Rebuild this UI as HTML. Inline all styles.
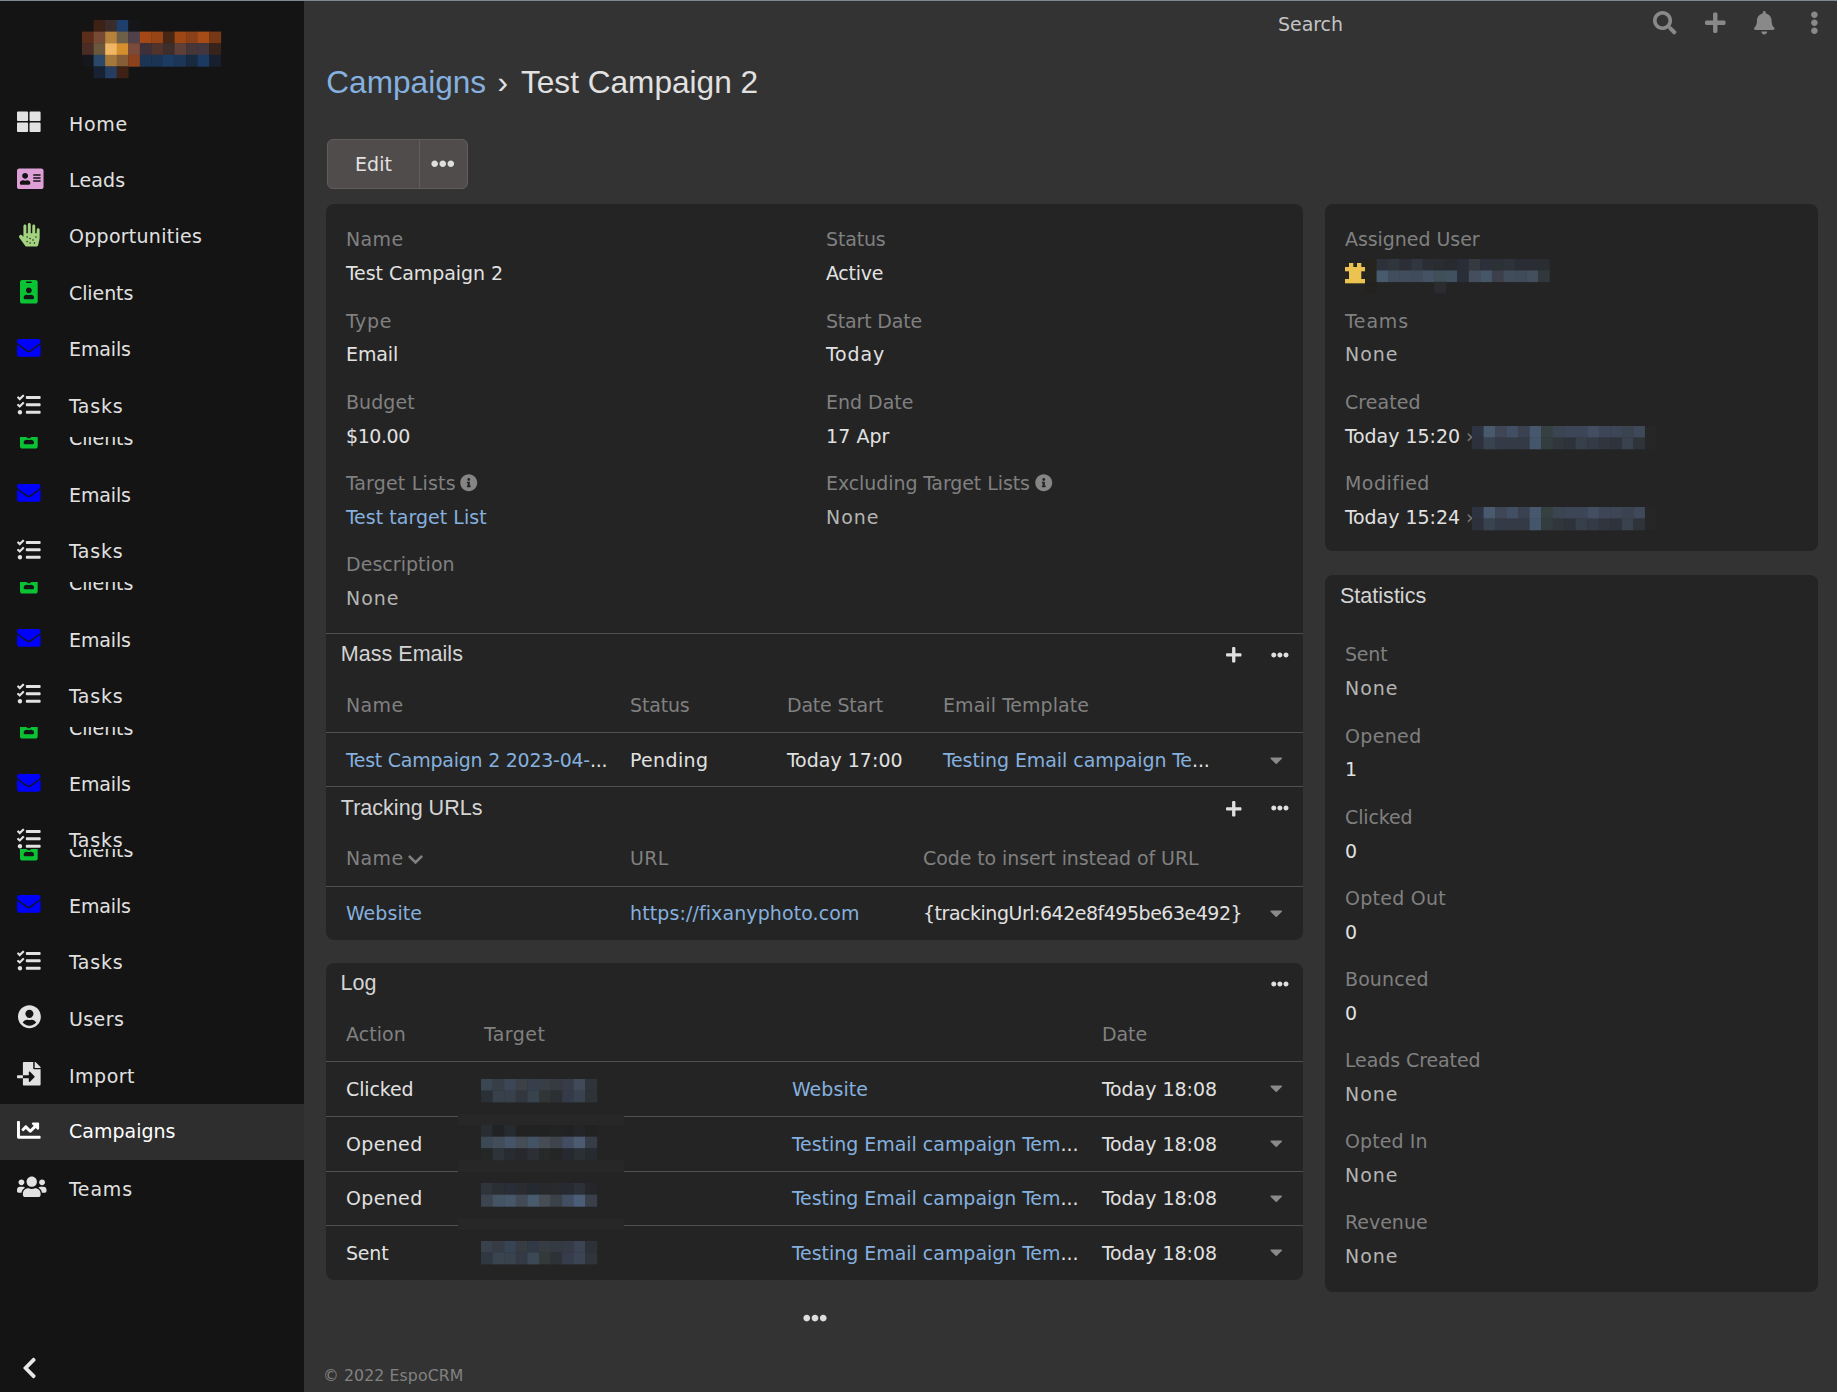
<!DOCTYPE html>
<html lang="en"><head><meta charset="utf-8"><title>Test Campaign 2 - Campaigns</title><style>
html,body{margin:0;padding:0;background:#333333}
body{width:1837px;height:1392px;background:#333333;position:relative;overflow:hidden;font-family:"DejaVu Sans Condensed","Liberation Sans",sans-serif}
.t{position:absolute;white-space:nowrap;line-height:normal}
.b{font-family:"DejaVu Sans Condensed","Liberation Sans",sans-serif;font-size:19.9px;letter-spacing:0.1px;transform:scaleX(1.06);transform-origin:0 50%}
.f{font-family:"DejaVu Sans Condensed","Liberation Sans",sans-serif;font-size:16.5px;letter-spacing:0.1px;transform:scaleX(1.06);transform-origin:0 50%}
.h{font-family:"Liberation Sans",sans-serif;font-size:31.6px}
.p{font-family:"Liberation Sans",sans-serif;font-size:21.55px}
.i{position:absolute;display:block;overflow:visible}
.r{position:absolute}
.clip{position:absolute;overflow:hidden}
.btn{position:absolute;box-sizing:border-box;background:#504c4b;border:1px solid #625d5c;border-radius:6px}
.btn .sep{position:absolute;top:0;bottom:0;width:1px;background:#625d5c}
</style></head>
<body>
<div class="r" style="left:0.0px;top:0.0px;width:304.0px;height:1392.0px;background:#141414;"></div>
<div class="r" style="left:0.0px;top:0.0px;width:1837.0px;height:1.0px;background:#7c8a95;"></div>
<svg class="i" style="left:82.00px;top:20.00px" width="138.84" height="58.00" viewBox="0 0 138.84 58.00"><rect x="11.57" y="0.00" width="11.87" height="11.90" fill="#3d2115"/><rect x="23.14" y="0.00" width="11.87" height="11.90" fill="#3b2c2c"/><rect x="34.71" y="0.00" width="11.87" height="11.90" fill="#1e3f6b"/><rect x="46.28" y="0.00" width="11.87" height="11.90" fill="#15161a"/><rect x="0.00" y="11.60" width="11.87" height="11.90" fill="#5c2d18"/><rect x="11.57" y="11.60" width="11.87" height="11.90" fill="#764a35"/><rect x="23.14" y="11.60" width="11.87" height="11.90" fill="#b5823b"/><rect x="34.71" y="11.60" width="11.87" height="11.90" fill="#6e5f48"/><rect x="46.28" y="11.60" width="11.87" height="11.90" fill="#4f404b"/><rect x="57.85" y="11.60" width="11.87" height="11.90" fill="#a34816"/><rect x="69.42" y="11.60" width="11.87" height="11.90" fill="#974516"/><rect x="80.99" y="11.60" width="11.87" height="11.90" fill="#472714"/><rect x="92.56" y="11.60" width="11.87" height="11.90" fill="#9e4716"/><rect x="104.13" y="11.60" width="11.87" height="11.90" fill="#8a4118"/><rect x="115.70" y="11.60" width="11.87" height="11.90" fill="#a84c17"/><rect x="127.27" y="11.60" width="11.87" height="11.90" fill="#763815"/><rect x="0.00" y="23.20" width="11.87" height="11.90" fill="#4a2c25"/><rect x="11.57" y="23.20" width="11.87" height="11.90" fill="#6b573b"/><rect x="23.14" y="23.20" width="11.87" height="11.90" fill="#f0b565"/><rect x="34.71" y="23.20" width="11.87" height="11.90" fill="#d48f2e"/><rect x="46.28" y="23.20" width="11.87" height="11.90" fill="#7a4a3b"/><rect x="57.85" y="23.20" width="11.87" height="11.90" fill="#3d3038"/><rect x="69.42" y="23.20" width="11.87" height="11.90" fill="#50332b"/><rect x="80.99" y="23.20" width="11.87" height="11.90" fill="#3d2e2c"/><rect x="92.56" y="23.20" width="11.87" height="11.90" fill="#5f4038"/><rect x="104.13" y="23.20" width="11.87" height="11.90" fill="#473638"/><rect x="115.70" y="23.20" width="11.87" height="11.90" fill="#43363c"/><rect x="127.27" y="23.20" width="11.87" height="11.90" fill="#38231a"/><rect x="0.00" y="34.80" width="11.87" height="11.90" fill="#15171c"/><rect x="11.57" y="34.80" width="11.87" height="11.90" fill="#2b4868"/><rect x="23.14" y="34.80" width="11.87" height="11.90" fill="#a4783a"/><rect x="34.71" y="34.80" width="11.87" height="11.90" fill="#855d36"/><rect x="46.28" y="34.80" width="11.87" height="11.90" fill="#8a411c"/><rect x="57.85" y="34.80" width="11.87" height="11.90" fill="#1b3454"/><rect x="69.42" y="34.80" width="11.87" height="11.90" fill="#1b3454"/><rect x="80.99" y="34.80" width="11.87" height="11.90" fill="#1c3a62"/><rect x="92.56" y="34.80" width="11.87" height="11.90" fill="#1b3657"/><rect x="104.13" y="34.80" width="11.87" height="11.90" fill="#182a40"/><rect x="115.70" y="34.80" width="11.87" height="11.90" fill="#1c3962"/><rect x="127.27" y="34.80" width="11.87" height="11.90" fill="#171f2e"/><rect x="11.57" y="46.40" width="11.87" height="11.90" fill="#172334"/><rect x="23.14" y="46.40" width="11.87" height="11.90" fill="#243d61"/><rect x="34.71" y="46.40" width="11.87" height="11.90" fill="#3d2114"/></svg>
<div class="r" style="left:0.0px;top:1104.0px;width:304.0px;height:56.3px;background:#2e2e2e;"></div>
<svg class="i" style="left:17.20px;top:110.20px;" width="23.60" height="23.60" viewBox="0 0 512 512"><path fill="#e2e2e2" d="M296 32h192c13.255 0 24 10.745 24 24v160c0 13.255-10.745 24-24 24H296c-13.255 0-24-10.745-24-24V56c0-13.255 10.745-24 24-24zm-80 0H24C10.745 32 0 42.745 0 56v160c0 13.255 10.745 24 24 24h192c13.255 0 24-10.745 24-24V56c0-13.255-10.745-24-24-24zM0 296v160c0 13.255 10.745 24 24 24h192c13.255 0 24-10.745 24-24V296c0-13.255-10.745-24-24-24H24c-13.255 0-24 10.745-24 24zm296 184h192c13.255 0 24-10.745 24-24V296c0-13.255-10.745-24-24-24H296c-13.255 0-24 10.745-24 24v160c0 13.255 10.745 24 24 24z"/></svg>
<div class="t b" style="left:69.4px;top:112.6px;color:#e1e1e1;letter-spacing:0.65px;">Home</div>
<svg class="i" style="left:17.10px;top:166.60px;" width="26.55" height="23.60" viewBox="0 0 576 512"><path fill="#dd9fd6" d="M528 32H48C21.5 32 0 53.5 0 80v352c0 26.500 21.500 48 48 48h480c26.500 0 48-21.500 48-48V80c0-26.500-21.500-48-48-48zm-352 96c35.300 0 64 28.700 64 64s-28.700 64-64 64-64-28.700-64-64 28.700-64 64-64zm112 236.800c0 10.600-10 19.200-22.400 19.200H86.400C74 384 64 375.400 64 364.800v-19.200c0-31.800 30.100-57.600 67.200-57.600h5c12.300 5.100 25.700 8 39.800 8s27.600-2.900 39.800-8h5c37.100 0 67.200 25.800 67.200 57.600v19.200zM512 312c0 4.400-3.600 8-8 8H360c-4.400 0-8-3.600-8-8v-16c0-4.400 3.600-8 8-8h144c4.400 0 8 3.600 8 8v16zm0-64c0 4.400-3.600 8-8 8H360c-4.400 0-8-3.600-8-8v-16c0-4.400 3.600-8 8-8h144c4.400 0 8 3.600 8 8v16zm0-64c0 4.400-3.600 8-8 8H360c-4.400 0-8-3.600-8-8v-16c0-4.400 3.600-8 8-8h144c4.400 0 8 3.600 8 8v16z"/></svg>
<div class="t b" style="left:69.4px;top:169.0px;color:#e1e1e1;letter-spacing:0.18px;">Leads</div>
<svg class="i" style="left:18.67px;top:222.80px;" width="20.65" height="23.60" viewBox="0 0 448 512"><path fill="#a3d37f" d="M416 112c-17.600 0-32 14.400-32 32v72c0 4.400-3.600 8-8 8h-16c-4.400 0-8-3.600-8-8V64c0-17.600-14.400-32-32-32s-32 14.400-32 32v152c0 4.400-3.600 8-8 8h-16c-4.400 0-8-3.600-8-8V32c0-17.600-14.400-32-32-32s-32 14.400-32 32v184c0 4.400-3.600 8-8 8h-16c-4.400 0-8-3.600-8-8V64c0-17.600-14.400-32-32-32S96 46.400 96 64v241l-23.600-32.500c-13-17.900-38-21.800-55.900-8.800s-21.800 38-8.800 55.900l125.600 172.700c9 12.400 23.500 19.800 38.800 19.800h197.600c22.300 0 41.600-15.300 46.700-37l26.500-112.700c3.200-13.700 4.900-28.300 5.100-42.300V144c0-17.600-14.400-32-32-32zM176 416c-8.800 0-16-7.200-16-16s7.200-16 16-16 16 7.200 16 16-7.200 16-16 16zm0-96c-8.800 0-16-7.200-16-16s7.200-16 16-16 16 7.200 16 16-7.200 16-16 16zm64 128c-8.800 0-16-7.200-16-16s7.200-16 16-16 16 7.200 16 16-7.200 16-16 16zm0-96c-8.800 0-16-7.200-16-16s7.200-16 16-16 16 7.200 16 16-7.200 16-16 16zm64 32c-8.800 0-16-7.200-16-16s7.200-16 16-16 16 7.200 16 16-7.200 16-16 16zm32 64c-8.800 0-16-7.200-16-16s7.200-16 16-16 16 7.200 16 16-7.200 16-16 16zm32-128c-8.800 0-16-7.200-16-16s7.200-16 16-16 16 7.200 16 16-7.200 16-16 16z"/></svg>
<div class="t b" style="left:69.4px;top:225.2px;color:#e1e1e1;letter-spacing:0.27px;">Opportunities</div>
<svg class="i" style="left:20.15px;top:279.80px;" width="17.70" height="23.60" viewBox="0 0 384 512"><path fill="#0ac335" d="M336 0H48C21.500 0 0 21.500 0 48v416c0 26.500 21.500 48 48 48h288c26.500 0 48-21.500 48-48V48c0-26.500-21.500-48-48-48zM144 32h96c8.800 0 16 7.200 16 16s-7.200 16-16 16h-96c-8.800 0-16-7.200-16-16s7.200-16 16-16zm48 128c35.300 0 64 28.700 64 64s-28.700 64-64 64-64-28.700-64-64 28.700-64 64-64zm112 236.800c0 10.600-10 19.200-22.400 19.200H102.400C90 416 80 407.400 80 396.800v-19.200c0-31.800 30.100-57.600 67.200-57.600h5c12.300 5.100 25.700 8 39.800 8s27.600-2.900 39.800-8h5c37.100 0 67.200 25.800 67.200 57.600v19.200z"/></svg>
<div class="t b" style="left:69.4px;top:282.2px;color:#e1e1e1;letter-spacing:-0.08px;">Clients</div>
<svg class="i" style="left:17.20px;top:335.60px;" width="23.60" height="23.60" viewBox="0 0 512 512"><path fill="#0000ff" d="M502.300 190.800c3.900-3.100 9.700-.2 9.700 4.700V400c0 26.500-21.500 48-48 48H48c-26.500 0-48-21.500-48-48V195.600c0-5 5.700-7.800 9.700-4.700 22.400 17.400 52.100 39.500 154.100 113.600 21.100 15.400 56.700 47.800 92.200 47.600 35.700.3 72-32.800 92.300-47.600 102-74.100 131.600-96.300 154-113.700zM256 320c23.200.4 56.600-29.200 73.400-41.400 132.700-96.300 142.800-104.700 173.400-128.700 5.800-4.500 9.200-11.500 9.200-18.900v-19c0-26.500-21.500-48-48-48H48C21.500 64 0 85.500 0 112v19c0 7.400 3.400 14.300 9.200 18.900 30.600 23.900 40.700 32.400 173.400 128.700 16.800 12.200 50.200 41.800 73.400 41.400z"/></svg>
<div class="t b" style="left:69.4px;top:338.0px;color:#e1e1e1;letter-spacing:-0.10px;">Emails</div>
<svg class="i" style="left:17.20px;top:392.60px;" width="23.60" height="23.60" viewBox="0 0 512 512"><path fill="#e2e2e2" d="M139.610 35.500a12 12 0 0 0-17 0L58.930 98.810l-22.700-22.120a12 12 0 0 0-17 0L3.530 92.410a12 12 0 0 0 0 17l47.590 47.400a12.780 12.780 0 0 0 17.610 0l15.590-15.620L156.520 69a12.090 12.090 0 0 0 .09-17zm0 159.190a12 12 0 0 0-17 0l-63.680 63.720-22.700-22.100a12 12 0 0 0-17 0L3.530 252a12 12 0 0 0 0 17L51 316.500a12.770 12.770 0 0 0 17.600 0l15.700-15.690 72.200-72.220a12 12 0 0 0 .09-16.900zM64 368c-26.490 0-48.590 21.500-48.590 48S37.530 464 64 464a48 48 0 0 0 0-96zm432 16H208a16 16 0 0 0-16 16v32a16 16 0 0 0 16 16h288a16 16 0 0 0 16-16v-32a16 16 0 0 0-16-16zm0-320H208a16 16 0 0 0-16 16v32a16 16 0 0 0 16 16h288a16 16 0 0 0 16-16V80a16 16 0 0 0-16-16zm0 160H208a16 16 0 0 0-16 16v32a16 16 0 0 0 16 16h288a16 16 0 0 0 16-16v-32a16 16 0 0 0-16-16z"/></svg>
<div class="t b" style="left:69.4px;top:395.0px;color:#e1e1e1;letter-spacing:0.74px;">Tasks</div>
<div class="clip" style="left:0;top:436.6px;width:304px;height:24px"><svg class="i" style="left:20.15px;top:-12.00px;" width="17.70" height="23.60" viewBox="0 0 384 512"><path fill="#0ac335" d="M336 0H48C21.500 0 0 21.500 0 48v416c0 26.500 21.500 48 48 48h288c26.500 0 48-21.500 48-48V48c0-26.500-21.500-48-48-48zM144 32h96c8.800 0 16 7.200 16 16s-7.200 16-16 16h-96c-8.800 0-16-7.200-16-16s7.200-16 16-16zm48 128c35.300 0 64 28.700 64 64s-28.700 64-64 64-64-28.700-64-64 28.700-64 64-64zm112 236.800c0 10.600-10 19.200-22.400 19.200H102.400C90 416 80 407.400 80 396.800v-19.200c0-31.800 30.100-57.600 67.200-57.600h5c12.300 5.100 25.700 8 39.800 8s27.600-2.900 39.800-8h5c37.100 0 67.200 25.800 67.200 57.600v19.200z"/></svg><div class="t b" style="left:69.4px;top:-9.6px;color:#e1e1e1;letter-spacing:-0.08px;">Clients</div></div>
<svg class="i" style="left:17.20px;top:481.20px;" width="23.60" height="23.60" viewBox="0 0 512 512"><path fill="#0000ff" d="M502.300 190.800c3.900-3.100 9.700-.2 9.700 4.700V400c0 26.500-21.500 48-48 48H48c-26.500 0-48-21.500-48-48V195.600c0-5 5.700-7.800 9.700-4.700 22.400 17.400 52.100 39.500 154.100 113.600 21.100 15.400 56.700 47.800 92.200 47.600 35.700.3 72-32.800 92.300-47.600 102-74.100 131.600-96.300 154-113.700zM256 320c23.200.4 56.600-29.200 73.400-41.400 132.700-96.300 142.800-104.700 173.400-128.700 5.800-4.500 9.200-11.500 9.200-18.900v-19c0-26.500-21.500-48-48-48H48C21.500 64 0 85.500 0 112v19c0 7.400 3.400 14.300 9.200 18.900 30.600 23.900 40.700 32.400 173.400 128.700 16.800 12.200 50.200 41.800 73.400 41.400z"/></svg>
<div class="t b" style="left:69.4px;top:483.6px;color:#e1e1e1;letter-spacing:-0.10px;">Emails</div>
<svg class="i" style="left:17.20px;top:537.60px;" width="23.60" height="23.60" viewBox="0 0 512 512"><path fill="#e2e2e2" d="M139.610 35.500a12 12 0 0 0-17 0L58.930 98.810l-22.700-22.120a12 12 0 0 0-17 0L3.530 92.410a12 12 0 0 0 0 17l47.590 47.400a12.780 12.780 0 0 0 17.610 0l15.590-15.620L156.520 69a12.090 12.090 0 0 0 .09-17zm0 159.190a12 12 0 0 0-17 0l-63.680 63.720-22.700-22.100a12 12 0 0 0-17 0L3.530 252a12 12 0 0 0 0 17L51 316.500a12.770 12.770 0 0 0 17.600 0l15.700-15.690 72.200-72.220a12 12 0 0 0 .09-16.900zM64 368c-26.490 0-48.590 21.500-48.590 48S37.530 464 64 464a48 48 0 0 0 0-96zm432 16H208a16 16 0 0 0-16 16v32a16 16 0 0 0 16 16h288a16 16 0 0 0 16-16v-32a16 16 0 0 0-16-16zm0-320H208a16 16 0 0 0-16 16v32a16 16 0 0 0 16 16h288a16 16 0 0 0 16-16V80a16 16 0 0 0-16-16zm0 160H208a16 16 0 0 0-16 16v32a16 16 0 0 0 16 16h288a16 16 0 0 0 16-16v-32a16 16 0 0 0-16-16z"/></svg>
<div class="t b" style="left:69.4px;top:540.0px;color:#e1e1e1;letter-spacing:0.74px;">Tasks</div>
<div class="clip" style="left:0;top:581.6px;width:304px;height:24px"><svg class="i" style="left:20.15px;top:-12.00px;" width="17.70" height="23.60" viewBox="0 0 384 512"><path fill="#0ac335" d="M336 0H48C21.500 0 0 21.500 0 48v416c0 26.500 21.500 48 48 48h288c26.500 0 48-21.500 48-48V48c0-26.500-21.500-48-48-48zM144 32h96c8.800 0 16 7.200 16 16s-7.200 16-16 16h-96c-8.800 0-16-7.200-16-16s7.200-16 16-16zm48 128c35.300 0 64 28.700 64 64s-28.700 64-64 64-64-28.700-64-64 28.700-64 64-64zm112 236.800c0 10.600-10 19.200-22.400 19.200H102.400C90 416 80 407.400 80 396.800v-19.200c0-31.800 30.100-57.600 67.200-57.600h5c12.300 5.100 25.700 8 39.800 8s27.600-2.900 39.800-8h5c37.100 0 67.200 25.800 67.200 57.600v19.200z"/></svg><div class="t b" style="left:69.4px;top:-9.6px;color:#e1e1e1;letter-spacing:-0.08px;">Clients</div></div>
<svg class="i" style="left:17.20px;top:626.20px;" width="23.60" height="23.60" viewBox="0 0 512 512"><path fill="#0000ff" d="M502.300 190.800c3.900-3.100 9.700-.2 9.700 4.700V400c0 26.500-21.500 48-48 48H48c-26.500 0-48-21.500-48-48V195.600c0-5 5.700-7.800 9.700-4.700 22.400 17.400 52.100 39.500 154.100 113.600 21.100 15.400 56.700 47.800 92.200 47.600 35.700.3 72-32.800 92.300-47.600 102-74.100 131.600-96.300 154-113.700zM256 320c23.200.4 56.600-29.200 73.400-41.400 132.700-96.300 142.800-104.700 173.400-128.700 5.800-4.500 9.200-11.500 9.200-18.900v-19c0-26.500-21.500-48-48-48H48C21.500 64 0 85.500 0 112v19c0 7.400 3.400 14.300 9.200 18.900 30.600 23.900 40.700 32.400 173.400 128.700 16.800 12.200 50.200 41.800 73.400 41.400z"/></svg>
<div class="t b" style="left:69.4px;top:628.6px;color:#e1e1e1;letter-spacing:-0.10px;">Emails</div>
<svg class="i" style="left:17.20px;top:682.40px;" width="23.60" height="23.60" viewBox="0 0 512 512"><path fill="#e2e2e2" d="M139.610 35.500a12 12 0 0 0-17 0L58.930 98.810l-22.700-22.120a12 12 0 0 0-17 0L3.530 92.410a12 12 0 0 0 0 17l47.590 47.400a12.780 12.780 0 0 0 17.610 0l15.590-15.620L156.520 69a12.090 12.090 0 0 0 .09-17zm0 159.190a12 12 0 0 0-17 0l-63.680 63.720-22.700-22.100a12 12 0 0 0-17 0L3.530 252a12 12 0 0 0 0 17L51 316.500a12.770 12.770 0 0 0 17.600 0l15.700-15.690 72.200-72.220a12 12 0 0 0 .09-16.900zM64 368c-26.490 0-48.590 21.500-48.590 48S37.530 464 64 464a48 48 0 0 0 0-96zm432 16H208a16 16 0 0 0-16 16v32a16 16 0 0 0 16 16h288a16 16 0 0 0 16-16v-32a16 16 0 0 0-16-16zm0-320H208a16 16 0 0 0-16 16v32a16 16 0 0 0 16 16h288a16 16 0 0 0 16-16V80a16 16 0 0 0-16-16zm0 160H208a16 16 0 0 0-16 16v32a16 16 0 0 0 16 16h288a16 16 0 0 0 16-16v-32a16 16 0 0 0-16-16z"/></svg>
<div class="t b" style="left:69.4px;top:684.8px;color:#e1e1e1;letter-spacing:0.74px;">Tasks</div>
<div class="clip" style="left:0;top:726.6px;width:304px;height:24px"><svg class="i" style="left:20.15px;top:-12.10px;" width="17.70" height="23.60" viewBox="0 0 384 512"><path fill="#0ac335" d="M336 0H48C21.500 0 0 21.500 0 48v416c0 26.500 21.500 48 48 48h288c26.500 0 48-21.500 48-48V48c0-26.500-21.500-48-48-48zM144 32h96c8.800 0 16 7.200 16 16s-7.200 16-16 16h-96c-8.800 0-16-7.200-16-16s7.200-16 16-16zm48 128c35.300 0 64 28.700 64 64s-28.700 64-64 64-64-28.700-64-64 28.700-64 64-64zm112 236.800c0 10.600-10 19.200-22.400 19.200H102.400C90 416 80 407.400 80 396.800v-19.200c0-31.800 30.100-57.600 67.200-57.600h5c12.300 5.100 25.700 8 39.800 8s27.600-2.900 39.800-8h5c37.100 0 67.200 25.800 67.200 57.600v19.200z"/></svg><div class="t b" style="left:69.4px;top:-9.7px;color:#e1e1e1;letter-spacing:-0.08px;">Clients</div></div>
<svg class="i" style="left:17.20px;top:770.50px;" width="23.60" height="23.60" viewBox="0 0 512 512"><path fill="#0000ff" d="M502.300 190.800c3.900-3.100 9.700-.2 9.700 4.700V400c0 26.500-21.500 48-48 48H48c-26.500 0-48-21.500-48-48V195.600c0-5 5.700-7.800 9.700-4.700 22.400 17.400 52.100 39.500 154.100 113.600 21.100 15.400 56.700 47.800 92.200 47.600 35.700.3 72-32.800 92.300-47.600 102-74.100 131.600-96.300 154-113.700zM256 320c23.200.4 56.600-29.200 73.400-41.400 132.700-96.300 142.800-104.700 173.400-128.700 5.800-4.500 9.200-11.500 9.200-18.900v-19c0-26.500-21.500-48-48-48H48C21.500 64 0 85.500 0 112v19c0 7.400 3.400 14.300 9.200 18.900 30.600 23.900 40.700 32.400 173.400 128.700 16.800 12.200 50.200 41.800 73.400 41.400z"/></svg>
<div class="t b" style="left:69.4px;top:772.9px;color:#e1e1e1;letter-spacing:-0.10px;">Emails</div>
<svg class="i" style="left:17.20px;top:827.00px;" width="23.60" height="23.60" viewBox="0 0 512 512"><path fill="#e2e2e2" d="M139.610 35.500a12 12 0 0 0-17 0L58.930 98.810l-22.700-22.120a12 12 0 0 0-17 0L3.530 92.410a12 12 0 0 0 0 17l47.590 47.400a12.780 12.780 0 0 0 17.610 0l15.590-15.620L156.520 69a12.090 12.090 0 0 0 .09-17zm0 159.190a12 12 0 0 0-17 0l-63.680 63.720-22.700-22.100a12 12 0 0 0-17 0L3.530 252a12 12 0 0 0 0 17L51 316.500a12.770 12.770 0 0 0 17.600 0l15.700-15.690 72.200-72.220a12 12 0 0 0 .09-16.900zM64 368c-26.490 0-48.590 21.500-48.590 48S37.530 464 64 464a48 48 0 0 0 0-96zm432 16H208a16 16 0 0 0-16 16v32a16 16 0 0 0 16 16h288a16 16 0 0 0 16-16v-32a16 16 0 0 0-16-16zm0-320H208a16 16 0 0 0-16 16v32a16 16 0 0 0 16 16h288a16 16 0 0 0 16-16V80a16 16 0 0 0-16-16zm0 160H208a16 16 0 0 0-16 16v32a16 16 0 0 0 16 16h288a16 16 0 0 0 16-16v-32a16 16 0 0 0-16-16z"/></svg>
<div class="t b" style="left:69.4px;top:829.4px;color:#e1e1e1;letter-spacing:0.74px;">Tasks</div>
<div class="clip" style="left:0;top:848.7px;width:304px;height:24px"><svg class="i" style="left:20.15px;top:-12.10px;" width="17.70" height="23.60" viewBox="0 0 384 512"><path fill="#0ac335" d="M336 0H48C21.500 0 0 21.500 0 48v416c0 26.500 21.500 48 48 48h288c26.500 0 48-21.500 48-48V48c0-26.500-21.500-48-48-48zM144 32h96c8.800 0 16 7.200 16 16s-7.200 16-16 16h-96c-8.800 0-16-7.200-16-16s7.200-16 16-16zm48 128c35.300 0 64 28.700 64 64s-28.700 64-64 64-64-28.700-64-64 28.700-64 64-64zm112 236.800c0 10.600-10 19.200-22.400 19.200H102.400C90 416 80 407.400 80 396.800v-19.200c0-31.800 30.100-57.600 67.200-57.600h5c12.300 5.100 25.700 8 39.800 8s27.600-2.900 39.800-8h5c37.100 0 67.200 25.800 67.200 57.600v19.200z"/></svg><div class="t b" style="left:69.4px;top:-9.7px;color:#e1e1e1;letter-spacing:-0.08px;">Clients</div></div>
<svg class="i" style="left:17.20px;top:892.40px;" width="23.60" height="23.60" viewBox="0 0 512 512"><path fill="#0000ff" d="M502.300 190.800c3.900-3.100 9.700-.2 9.700 4.700V400c0 26.500-21.500 48-48 48H48c-26.500 0-48-21.500-48-48V195.600c0-5 5.700-7.800 9.700-4.700 22.400 17.400 52.100 39.500 154.100 113.600 21.100 15.400 56.700 47.800 92.200 47.600 35.700.3 72-32.800 92.300-47.600 102-74.100 131.600-96.300 154-113.700zM256 320c23.200.4 56.600-29.200 73.400-41.400 132.700-96.300 142.800-104.700 173.400-128.700 5.800-4.500 9.200-11.500 9.200-18.900v-19c0-26.500-21.500-48-48-48H48C21.500 64 0 85.500 0 112v19c0 7.400 3.400 14.300 9.200 18.900 30.600 23.900 40.700 32.400 173.400 128.700 16.800 12.200 50.200 41.800 73.400 41.400z"/></svg>
<div class="t b" style="left:69.4px;top:894.8px;color:#e1e1e1;letter-spacing:-0.10px;">Emails</div>
<svg class="i" style="left:17.20px;top:949.00px;" width="23.60" height="23.60" viewBox="0 0 512 512"><path fill="#e2e2e2" d="M139.610 35.500a12 12 0 0 0-17 0L58.930 98.810l-22.700-22.120a12 12 0 0 0-17 0L3.530 92.410a12 12 0 0 0 0 17l47.590 47.400a12.780 12.780 0 0 0 17.610 0l15.590-15.620L156.520 69a12.090 12.090 0 0 0 .09-17zm0 159.190a12 12 0 0 0-17 0l-63.680 63.720-22.700-22.100a12 12 0 0 0-17 0L3.530 252a12 12 0 0 0 0 17L51 316.500a12.770 12.770 0 0 0 17.600 0l15.700-15.690 72.200-72.220a12 12 0 0 0 .09-16.900zM64 368c-26.490 0-48.590 21.500-48.590 48S37.530 464 64 464a48 48 0 0 0 0-96zm432 16H208a16 16 0 0 0-16 16v32a16 16 0 0 0 16 16h288a16 16 0 0 0 16-16v-32a16 16 0 0 0-16-16zm0-320H208a16 16 0 0 0-16 16v32a16 16 0 0 0 16 16h288a16 16 0 0 0 16-16V80a16 16 0 0 0-16-16zm0 160H208a16 16 0 0 0-16 16v32a16 16 0 0 0 16 16h288a16 16 0 0 0 16-16v-32a16 16 0 0 0-16-16z"/></svg>
<div class="t b" style="left:69.4px;top:951.4px;color:#e1e1e1;letter-spacing:0.74px;">Tasks</div>
<svg class="i" style="left:17.57px;top:1005.10px;" width="22.86" height="23.60" viewBox="0 0 496 512"><path fill="#e2e2e2" d="M248 8C111 8 0 119 0 256s111 248 248 248 248-111 248-248S385 8 248 8zm0 96c48.600 0 88 39.400 88 88s-39.400 88-88 88-88-39.400-88-88 39.400-88 88-88zm0 344c-58.700 0-111.300-26.600-146.500-68.200 18.800-35.400 55.600-59.800 98.500-59.800 2.400 0 4.800.4 7.100 1.100 13 4.200 26.600 6.900 40.900 6.900 14.300 0 28-2.700 40.900-6.900 2.300-.7 4.700-1.100 7.100-1.100 42.900 0 79.700 24.400 98.500 59.800C359.300 421.400 306.700 448 248 448z"/></svg>
<div class="t b" style="left:69.4px;top:1007.5px;color:#e1e1e1;letter-spacing:0.39px;">Users</div>
<svg class="i" style="left:17.20px;top:1062.20px;" width="23.60" height="23.60" viewBox="0 0 512 512"><path fill="#e2e2e2" d="M16 288c-8.800 0-16 7.200-16 16v32c0 8.800 7.200 16 16 16h112v-64zm489-183L407.100 7c-4.500-4.500-10.600-7-17-7H384v128h128v-6.100c0-6.300-2.500-12.400-7-16.900zm-153 31V0H152c-13.300 0-24 10.700-24 24v264h128v-65.200c0-14.300 17.300-21.400 27.400-11.300L379 308c6.600 6.700 6.600 17.400 0 24l-95.700 96.400c-10.100 10.100-27.400 3-27.400-11.300V352H128v136c0 13.300 10.700 24 24 24h336c13.300 0 24-10.700 24-24V160H376c-13.200 0-24-10.800-24-24z"/></svg>
<div class="t b" style="left:69.4px;top:1064.6px;color:#e1e1e1;letter-spacing:0.48px;">Import</div>
<svg class="i" style="left:17.20px;top:1117.80px;" width="23.60" height="23.60" viewBox="0 0 512 512"><path fill="#ffffff" d="M496 384H64V80c0-8.840-7.160-16-16-16H16C7.160 64 0 71.160 0 80v336c0 17.670 14.330 32 32 32h464c8.840 0 16-7.160 16-16v-32c0-8.840-7.160-16-16-16zM464 96H345.940c-21.380 0-32.090 25.850-16.970 40.970l32.400 32.400L288 242.750l-73.370-73.370c-12.500-12.500-32.760-12.500-45.250 0l-68.690 68.690c-6.250 6.250-6.250 16.380 0 22.630l22.620 22.620c6.250 6.250 16.380 6.250 22.630 0L192 237.250l73.370 73.370c12.500 12.500 32.760 12.500 45.250 0l96-96 32.400 32.400c15.120 15.120 40.970 4.410 40.970-16.970V112c.01-8.840-7.150-16-15.990-16z"/></svg>
<div class="t b" style="left:69.4px;top:1120.2px;color:#ffffff;letter-spacing:0.02px;">Campaigns</div>
<svg class="i" style="left:17.10px;top:1175.10px;" width="29.50" height="23.60" viewBox="0 0 640 512"><path fill="#e2e2e2" d="M96 224c35.300 0 64-28.700 64-64s-28.700-64-64-64-64 28.700-64 64 28.700 64 64 64zm448 0c35.300 0 64-28.700 64-64s-28.700-64-64-64-64 28.700-64 64 28.700 64 64 64zm32 32h-64c-17.600 0-33.500 7.100-45.100 18.600 40.300 22.100 68.900 62 75.100 109.400h66c17.700 0 32-14.300 32-32v-32c0-35.300-28.700-64-64-64zm-256 0c61.900 0 112-50.100 112-112S381.900 32 320 32 208 82.100 208 144s50.100 112 112 112zm76.800 32h-8.300c-20.800 10-43.900 16-68.500 16s-47.600-6-68.500-16h-8.300C179.600 288 128 339.600 128 403.200V432c0 26.500 21.500 48 48 48h288c26.500 0 48-21.500 48-48v-28.800c0-63.600-51.600-115.200-115.200-115.200zm-223.700-13.400C161.500 263.100 145.600 256 128 256H64c-35.300 0-64 28.700-64 64v32c0 17.700 14.300 32 32 32h65.900c6.300-47.400 34.900-87.300 75.200-109.400z"/></svg>
<div class="t b" style="left:69.4px;top:1177.5px;color:#e1e1e1;letter-spacing:0.81px;">Teams</div>
<svg class="i" style="left:21.60px;top:1356.30px;" width="15.00" height="24.00" viewBox="0 0 320 512"><path fill="#e8e8e8" d="M34.520 239.030L228.870 44.690c9.370-9.370 24.570-9.370 33.940 0l22.670 22.670c9.360 9.360 9.370 24.520.04 33.900L131.490 256l154.020 154.750c9.340 9.380 9.320 24.540-.04 33.900l-22.670 22.670c-9.370 9.370-24.570 9.370-33.940 0L34.520 272.970c-9.370-9.370-9.370-24.570 0-33.940z"/></svg>
<div class="t b" style="left:1278.2px;top:13.0px;color:#c4c4c4;letter-spacing:-0.03px;">Search</div>
<svg class="i" style="left:1652.95px;top:11.05px;" width="23.50" height="23.50" viewBox="0 0 512 512"><path fill="#898989" d="M505 442.700L405.300 343c-4.500-4.500-10.600-7-17-7H372c27.600-35.300 44-79.700 44-128C416 93.100 322.900 0 208 0S0 93.100 0 208s93.100 208 208 208c48.300 0 92.700-16.400 128-44v16.300c0 6.400 2.500 12.500 7 17l99.700 99.700c9.400 9.400 24.600 9.400 33.900 0l28.300-28.300c9.400-9.400 9.400-24.600.1-34zM208 336c-70.700 0-128-57.200-128-128 0-70.700 57.200-128 128-128 70.700 0 128 57.200 128 128 0 70.700-57.200 128-128 128z"/></svg>
<svg class="i" style="left:1705.32px;top:10.55px;" width="20.56" height="23.50" viewBox="0 0 448 512"><path fill="#898989" d="M416 208H272V64c0-17.670-14.330-32-32-32h-32c-17.670 0-32 14.330-32 32v144H32c-17.670 0-32 14.330-32 32v32c0 17.670 14.330 32 32 32h144v144c0 17.670 14.330 32 32 32h32c17.670 0 32-14.330 32-32V304h144c17.670 0 32-14.330 32-32v-32c0-17.670-14.330-32-32-32z"/></svg>
<svg class="i" style="left:1754.42px;top:10.55px;" width="20.56" height="23.50" viewBox="0 0 448 512"><path fill="#898989" d="M224 512c35.320 0 63.970-28.650 63.970-64H160.030c0 35.350 28.650 64 63.970 64zm215.390-149.710c-19.320-20.760-55.470-51.990-55.470-154.290 0-77.700-54.480-139.900-127.940-155.160V32c0-17.670-14.320-32-31.980-32s-31.980 14.330-31.980 32v20.840C118.560 68.100 64.080 130.300 64.080 208c0 102.300-36.150 133.530-55.470 154.290-6 6.450-8.660 14.160-8.610 21.710.11 16.400 12.980 32 32.100 32h383.800c19.120 0 32-15.600 32.100-32 .05-7.550-2.610-15.270-8.610-21.710z"/></svg>
<svg class="i" style="left:1809.69px;top:10.55px;" width="8.81" height="23.50" viewBox="0 0 192 512"><path fill="#898989" d="M96 184c39.800 0 72 32.200 72 72s-32.200 72-72 72-72-32.200-72-72 32.200-72 72-72zM24 80c0 39.800 32.200 72 72 72s72-32.200 72-72S135.800 8 96 8 24 40.200 24 80zm0 352c0 39.800 32.200 72 72 72s72-32.200 72-72-32.200-72-72-72-72 32.200-72 72z"/></svg>
<div class="t h" style="left:326.3px;top:64.0px;color:#85b0df;">Campaigns</div>
<div class="t h" style="left:497.5px;top:64.0px;color:#e1e1e1;">›</div>
<div class="t h" style="left:521.0px;top:64.0px;color:#e1e1e1;">Test Campaign 2</div>
<div class="btn" style="left:326.5px;top:139.4px;width:141.2px;height:49.6px"><div class="sep" style="left:91.6px"></div></div>
<div class="t b" style="left:354.7px;top:153.0px;color:#e1e1e1;letter-spacing:0.05px;">Edit</div>
<svg class="i" style="left:431.15px;top:152.45px;" width="23.50" height="23.50" viewBox="0 0 512 512"><path fill="#dedede" d="M328 256c0 39.800-32.200 72-72 72s-72-32.200-72-72 32.200-72 72-72 72 32.200 72 72zm104-72c-39.800 0-72 32.200-72 72s32.200 72 72 72 72-32.200 72-72-32.200-72-72-72zm-352 0c-39.800 0-72 32.200-72 72s32.200 72 72 72 72-32.200 72-72-32.200-72-72-72z"/></svg>
<div class="r" style="left:326.3px;top:204.0px;width:976.7px;height:736.0px;background:#242424;border-radius:8px"></div>
<div class="t b" style="left:345.7px;top:228.4px;color:#808080;letter-spacing:0.36px;">Name</div>
<div class="t b" style="left:345.7px;top:262.2px;color:#e1e1e1;letter-spacing:-0.02px;">Test Campaign 2</div>
<div class="t b" style="left:825.5px;top:228.4px;color:#808080;letter-spacing:-0.14px;">Status</div>
<div class="t b" style="left:825.5px;top:262.2px;color:#e1e1e1;letter-spacing:-0.23px;">Active</div>
<div class="t b" style="left:345.7px;top:309.5px;color:#808080;letter-spacing:0.68px;">Type</div>
<div class="t b" style="left:345.7px;top:343.3px;color:#e1e1e1;letter-spacing:-0.10px;">Email</div>
<div class="t b" style="left:825.5px;top:309.5px;color:#808080;letter-spacing:-0.17px;">Start Date</div>
<div class="t b" style="left:825.5px;top:343.3px;color:#e1e1e1;letter-spacing:0.90px;">Today</div>
<div class="t b" style="left:345.7px;top:390.7px;color:#808080;letter-spacing:0.07px;">Budget</div>
<div class="t b" style="left:345.7px;top:424.5px;color:#e1e1e1;letter-spacing:-0.39px;">$10.00</div>
<div class="t b" style="left:825.5px;top:390.7px;color:#808080;letter-spacing:0.01px;">End Date</div>
<div class="t b" style="left:825.5px;top:424.5px;color:#e1e1e1;letter-spacing:0.08px;">17 Apr</div>
<div class="t b" style="left:345.7px;top:471.8px;color:#808080;letter-spacing:0.19px;">Target Lists</div>
<div class="t b" style="left:345.7px;top:505.6px;color:#85b0df;letter-spacing:0.05px;">Test target List</div>
<div class="t b" style="left:825.5px;top:471.8px;color:#808080;letter-spacing:-0.06px;">Excluding Target Lists</div>
<div class="t b" style="left:825.5px;top:505.6px;color:#b4b4b4;letter-spacing:0.90px;">None</div>
<div class="t b" style="left:345.7px;top:553.0px;color:#808080;letter-spacing:0.05px;">Description</div>
<div class="t b" style="left:345.7px;top:586.8px;color:#b4b4b4;letter-spacing:0.90px;">None</div>
<svg class="i" style="left:460.00px;top:473.60px;" width="17.50" height="17.50" viewBox="0 0 512 512"><path fill="#858585" d="M256 8C119.043 8 8 119.083 8 256c0 136.997 111.043 248 248 248s248-111.003 248-248C504 119.083 392.957 8 256 8zm0 110c23.196 0 42 18.804 42 42s-18.804 42-42 42-42-18.804-42-42 18.804-42 42-42zm56 254c0 6.627-5.373 12-12 12h-88c-6.627 0-12-5.373-12-12v-24c0-6.627 5.373-12 12-12h12v-64h-12c-6.627 0-12-5.373-12-12v-24c0-6.627 5.373-12 12-12h64c6.627 0 12 5.373 12 12v100h12c6.627 0 12 5.373 12 12v24z"/></svg>
<svg class="i" style="left:1035.00px;top:473.60px;" width="17.50" height="17.50" viewBox="0 0 512 512"><path fill="#858585" d="M256 8C119.043 8 8 119.083 8 256c0 136.997 111.043 248 248 248s248-111.003 248-248C504 119.083 392.957 8 256 8zm0 110c23.196 0 42 18.804 42 42s-18.804 42-42 42-42-18.804-42-42 18.804-42 42-42zm56 254c0 6.627-5.373 12-12 12h-88c-6.627 0-12-5.373-12-12v-24c0-6.627 5.373-12 12-12h12v-64h-12c-6.627 0-12-5.373-12-12v-24c0-6.627 5.373-12 12-12h64c6.627 0 12 5.373 12 12v100h12c6.627 0 12 5.373 12 12v24z"/></svg>
<div class="r" style="left:326.3px;top:633.0px;width:976.7px;height:1.0px;background:#544f4e;"></div>
<div class="t p" style="left:340.8px;top:641.0px;color:#d4d4d4;">Mass Emails</div>
<svg class="i" style="left:1226.00px;top:646.45px;" width="15.49" height="17.70" viewBox="0 0 448 512"><path fill="#e0e0e0" d="M416 208H272V64c0-17.670-14.330-32-32-32h-32c-17.670 0-32 14.330-32 32v144H32c-17.670 0-32 14.330-32 32v32c0 17.670 14.330 32 32 32h144v144c0 17.670 14.330 32 32 32h32c17.670 0 32-14.330 32-32V304h144c17.670 0 32-14.330 32-32v-32c0-17.670-14.330-32-32-32z"/></svg>
<svg class="i" style="left:1271.00px;top:645.80px;" width="17.80" height="17.80" viewBox="0 0 512 512"><path fill="#e0e0e0" d="M328 256c0 39.800-32.200 72-72 72s-72-32.200-72-72 32.200-72 72-72 72 32.200 72 72zm104-72c-39.800 0-72 32.200-72 72s32.200 72 72 72 72-32.200 72-72-32.200-72-72-72zm-352 0c-39.800 0-72 32.200-72 72s32.200 72 72 72 72-32.200 72-72-32.200-72-72-72z"/></svg>
<div class="t b" style="left:345.7px;top:694.0px;color:#808080;letter-spacing:0.36px;">Name</div>
<div class="t b" style="left:630.2px;top:694.0px;color:#808080;letter-spacing:-0.14px;">Status</div>
<div class="t b" style="left:786.7px;top:694.0px;color:#808080;letter-spacing:-0.17px;">Date Start</div>
<div class="t b" style="left:943.2px;top:694.0px;color:#808080;letter-spacing:0.08px;">Email Template</div>
<div class="r" style="left:326.3px;top:732.0px;width:976.7px;height:1.0px;background:#544f4e;"></div>
<div class="t b" style="left:345.7px;top:749.0px;color:#85b0df;letter-spacing:-0.22px;">Test Campaign 2 2023-04-<span style="color:#e1e1e1">...</span></div>
<div class="t b" style="left:630.2px;top:749.0px;color:#e1e1e1;letter-spacing:0.35px;">Pending</div>
<div class="t b" style="left:786.7px;top:749.0px;color:#e1e1e1;letter-spacing:0.04px;">Today 17:00</div>
<div class="t b" style="left:943.2px;top:749.0px;color:#85b0df;letter-spacing:-0.05px;">Testing Email campaign Te<span style="color:#e1e1e1">...</span></div>
<svg class="i" style="left:1269.95px;top:749.50px;" width="12.50" height="20.00" viewBox="0 0 320 512"><path fill="#8a8a8a" d="M31.300 192h257.300c17.800 0 26.700 21.500 14.100 34.100L174.100 354.800c-7.800 7.800-20.500 7.800-28.300 0L17.200 226.100C4.600 213.500 13.500 192 31.300 192z"/></svg>
<div class="r" style="left:326.3px;top:786.0px;width:976.7px;height:1.0px;background:#544f4e;"></div>
<div class="t p" style="left:340.8px;top:795.0px;color:#d4d4d4;">Tracking URLs</div>
<svg class="i" style="left:1226.00px;top:800.05px;" width="15.49" height="17.70" viewBox="0 0 448 512"><path fill="#e0e0e0" d="M416 208H272V64c0-17.670-14.330-32-32-32h-32c-17.670 0-32 14.330-32 32v144H32c-17.670 0-32 14.330-32 32v32c0 17.670 14.330 32 32 32h144v144c0 17.670 14.330 32 32 32h32c17.670 0 32-14.330 32-32V304h144c17.670 0 32-14.330 32-32v-32c0-17.670-14.330-32-32-32z"/></svg>
<svg class="i" style="left:1271.00px;top:799.40px;" width="17.80" height="17.80" viewBox="0 0 512 512"><path fill="#e0e0e0" d="M328 256c0 39.800-32.200 72-72 72s-72-32.200-72-72 32.200-72 72-72 72 32.200 72 72zm104-72c-39.800 0-72 32.200-72 72s32.200 72 72 72 72-32.200 72-72-32.200-72-72-72zm-352 0c-39.800 0-72 32.200-72 72s32.200 72 72 72 72-32.200 72-72-32.200-72-72-72z"/></svg>
<div class="t b" style="left:345.7px;top:847.0px;color:#808080;letter-spacing:0.36px;">Name</div>
<div class="t b" style="left:630.2px;top:847.0px;color:#808080;letter-spacing:0.36px;">URL</div>
<div class="t b" style="left:923.2px;top:847.0px;color:#808080;letter-spacing:-0.07px;">Code to insert instead of URL</div>
<svg class="i" style="left:408.40px;top:850.70px;" width="15.05" height="17.20" viewBox="0 0 448 512"><path fill="#808080" d="M207.029 381.476L12.686 187.132c-9.373-9.373-9.373-24.569 0-33.941l22.667-22.667c9.357-9.357 24.522-9.375 33.901-.04L224 284.505l154.745-154.021c9.379-9.335 24.544-9.317 33.901.04l22.667 22.667c9.373 9.373 9.373 24.569 0 33.941L240.971 381.476c-9.373 9.372-24.569 9.372-33.942 0z"/></svg>
<div class="r" style="left:326.3px;top:886.0px;width:976.7px;height:1.0px;background:#544f4e;"></div>
<div class="t b" style="left:345.7px;top:902.0px;color:#85b0df;letter-spacing:0.08px;">Website</div>
<div class="t b" style="left:630.2px;top:902.0px;color:#85b0df;letter-spacing:0.11px;">https://fixanyphoto.com</div>
<div class="t b" style="left:923.2px;top:902.0px;color:#e1e1e1;letter-spacing:-0.44px;">{trackingUrl:642e8f495be63e492}</div>
<svg class="i" style="left:1269.95px;top:902.50px;" width="12.50" height="20.00" viewBox="0 0 320 512"><path fill="#8a8a8a" d="M31.300 192h257.300c17.800 0 26.700 21.500 14.100 34.100L174.100 354.800c-7.800 7.800-20.500 7.800-28.300 0L17.200 226.100C4.600 213.500 13.500 192 31.300 192z"/></svg>
<div class="r" style="left:326.3px;top:962.8px;width:976.7px;height:317.4px;background:#242424;border-radius:8px"></div>
<div class="t p" style="left:340.5px;top:970.0px;color:#d4d4d4;">Log</div>
<svg class="i" style="left:1271.00px;top:974.90px;" width="17.80" height="17.80" viewBox="0 0 512 512"><path fill="#e0e0e0" d="M328 256c0 39.800-32.200 72-72 72s-72-32.200-72-72 32.200-72 72-72 72 32.200 72 72zm104-72c-39.800 0-72 32.200-72 72s32.200 72 72 72 72-32.200 72-72-32.200-72-72-72zm-352 0c-39.800 0-72 32.200-72 72s32.200 72 72 72 72-32.200 72-72-32.200-72-72-72z"/></svg>
<div class="t b" style="left:345.7px;top:1023.0px;color:#808080;letter-spacing:0.06px;">Action</div>
<div class="t b" style="left:484.2px;top:1023.0px;color:#808080;letter-spacing:0.51px;">Target</div>
<div class="t b" style="left:1102.2px;top:1023.0px;color:#808080;letter-spacing:-0.08px;">Date</div>
<div class="r" style="left:326.3px;top:1061.4px;width:976.7px;height:1.0px;background:#544f4e;"></div>
<div class="t b" style="left:345.7px;top:1077.9px;color:#e1e1e1;letter-spacing:-0.09px;">Clicked</div>
<div class="t b" style="left:792.2px;top:1077.9px;color:#85b0df;letter-spacing:0.08px;">Website</div>
<div class="t b" style="left:1102.2px;top:1077.9px;color:#e1e1e1;letter-spacing:-0.01px;">Today 18:08</div>
<svg class="i" style="left:1270.15px;top:1078.40px;" width="12.50" height="20.00" viewBox="0 0 320 512"><path fill="#8a8a8a" d="M31.300 192h257.300c17.800 0 26.700 21.500 14.100 34.100L174.100 354.800c-7.800 7.800-20.500 7.800-28.300 0L17.200 226.100C4.600 213.500 13.500 192 31.300 192z"/></svg>
<div class="r" style="left:326.3px;top:1116.0px;width:976.7px;height:1.0px;background:#544f4e;"></div>
<div class="t b" style="left:345.7px;top:1132.5px;color:#e1e1e1;letter-spacing:0.34px;">Opened</div>
<div class="t b" style="left:792.2px;top:1132.5px;color:#85b0df;letter-spacing:-0.01px;">Testing Email campaign Tem<span style="color:#e1e1e1">...</span></div>
<div class="t b" style="left:1102.2px;top:1132.5px;color:#e1e1e1;letter-spacing:-0.01px;">Today 18:08</div>
<svg class="i" style="left:1270.15px;top:1132.95px;" width="12.50" height="20.00" viewBox="0 0 320 512"><path fill="#8a8a8a" d="M31.300 192h257.300c17.800 0 26.700 21.500 14.100 34.100L174.100 354.800c-7.800 7.800-20.500 7.800-28.300 0L17.200 226.100C4.600 213.500 13.500 192 31.300 192z"/></svg>
<div class="r" style="left:326.3px;top:1171.0px;width:976.7px;height:1.0px;background:#544f4e;"></div>
<div class="t b" style="left:345.7px;top:1187.0px;color:#e1e1e1;letter-spacing:0.34px;">Opened</div>
<div class="t b" style="left:792.2px;top:1187.0px;color:#85b0df;letter-spacing:-0.01px;">Testing Email campaign Tem<span style="color:#e1e1e1">...</span></div>
<div class="t b" style="left:1102.2px;top:1187.0px;color:#e1e1e1;letter-spacing:-0.01px;">Today 18:08</div>
<svg class="i" style="left:1270.15px;top:1187.50px;" width="12.50" height="20.00" viewBox="0 0 320 512"><path fill="#8a8a8a" d="M31.300 192h257.300c17.800 0 26.700 21.500 14.100 34.100L174.100 354.800c-7.800 7.800-20.500 7.800-28.300 0L17.200 226.100C4.600 213.500 13.500 192 31.300 192z"/></svg>
<div class="r" style="left:326.3px;top:1225.0px;width:976.7px;height:1.0px;background:#544f4e;"></div>
<div class="t b" style="left:345.7px;top:1241.6px;color:#e1e1e1;letter-spacing:-0.18px;">Sent</div>
<div class="t b" style="left:792.2px;top:1241.6px;color:#85b0df;letter-spacing:-0.01px;">Testing Email campaign Tem<span style="color:#e1e1e1">...</span></div>
<div class="t b" style="left:1102.2px;top:1241.6px;color:#e1e1e1;letter-spacing:-0.01px;">Today 18:08</div>
<svg class="i" style="left:1270.15px;top:1242.05px;" width="12.50" height="20.00" viewBox="0 0 320 512"><path fill="#8a8a8a" d="M31.300 192h257.300c17.800 0 26.700 21.500 14.100 34.100L174.100 354.800c-7.800 7.800-20.500 7.800-28.300 0L17.200 226.100C4.600 213.500 13.500 192 31.300 192z"/></svg>
<div class="r" style="left:458.0px;top:1113.8px;width:166.0px;height:11.3px;background:#272727;"></div>
<div class="r" style="left:458.0px;top:1160.4px;width:166.0px;height:11.5px;background:#272727;"></div>
<div class="r" style="left:458.0px;top:1218.0px;width:166.0px;height:12.0px;background:#272727;"></div>
<svg class="i" style="left:481.10px;top:1079.00px" width="115.90" height="23.10" viewBox="0 0 115.90 23.10"><rect x="0.00" y="0.00" width="11.89" height="11.85" fill="#3a4651"/><rect x="11.59" y="0.00" width="11.89" height="11.85" fill="#383e47"/><rect x="23.18" y="0.00" width="11.89" height="11.85" fill="#3b4757"/><rect x="34.77" y="0.00" width="11.89" height="11.85" fill="#3c4047"/><rect x="46.36" y="0.00" width="11.89" height="11.85" fill="#363f4b"/><rect x="57.95" y="0.00" width="11.89" height="11.85" fill="#383e46"/><rect x="69.54" y="0.00" width="11.89" height="11.85" fill="#363b42"/><rect x="81.13" y="0.00" width="11.89" height="11.85" fill="#373c48"/><rect x="92.72" y="0.00" width="11.89" height="11.85" fill="#404a59"/><rect x="104.31" y="0.00" width="11.89" height="11.85" fill="#2f343a"/><rect x="0.00" y="11.55" width="11.89" height="11.85" fill="#2a3036"/><rect x="11.59" y="11.55" width="11.89" height="11.85" fill="#38414b"/><rect x="23.18" y="11.55" width="11.89" height="11.85" fill="#37404b"/><rect x="34.77" y="11.55" width="11.89" height="11.85" fill="#32363f"/><rect x="46.36" y="11.55" width="11.89" height="11.85" fill="#37444d"/><rect x="57.95" y="11.55" width="11.89" height="11.85" fill="#313535"/><rect x="69.54" y="11.55" width="11.89" height="11.85" fill="#2b3034"/><rect x="81.13" y="11.55" width="11.89" height="11.85" fill="#343a47"/><rect x="92.72" y="11.55" width="11.89" height="11.85" fill="#39424e"/><rect x="104.31" y="11.55" width="11.89" height="11.85" fill="#2e3338"/></svg>
<svg class="i" style="left:481.10px;top:1125.10px" width="115.90" height="34.95" viewBox="0 0 115.90 34.95"><rect x="0.00" y="0.00" width="11.89" height="11.95" fill="#292c30"/><rect x="11.59" y="0.00" width="11.89" height="11.95" fill="#212223"/><rect x="23.18" y="0.00" width="11.89" height="11.95" fill="#252b30"/><rect x="34.77" y="0.00" width="11.89" height="11.95" fill="#222222"/><rect x="46.36" y="0.00" width="11.89" height="11.95" fill="#212222"/><rect x="57.95" y="0.00" width="11.89" height="11.95" fill="#212121"/><rect x="69.54" y="0.00" width="11.89" height="11.95" fill="#222424"/><rect x="81.13" y="0.00" width="11.89" height="11.95" fill="#212223"/><rect x="92.72" y="0.00" width="11.89" height="11.95" fill="#232528"/><rect x="104.31" y="0.00" width="11.89" height="11.95" fill="#222222"/><rect x="0.00" y="11.65" width="11.89" height="11.95" fill="#3d4855"/><rect x="11.59" y="11.65" width="11.89" height="11.95" fill="#434d5a"/><rect x="23.18" y="11.65" width="11.89" height="11.95" fill="#465468"/><rect x="34.77" y="11.65" width="11.89" height="11.95" fill="#454d57"/><rect x="46.36" y="11.65" width="11.89" height="11.95" fill="#435363"/><rect x="57.95" y="11.65" width="11.89" height="11.95" fill="#464c54"/><rect x="69.54" y="11.65" width="11.89" height="11.95" fill="#3e444c"/><rect x="81.13" y="11.65" width="11.89" height="11.95" fill="#434d61"/><rect x="92.72" y="11.65" width="11.89" height="11.95" fill="#4c5b71"/><rect x="104.31" y="11.65" width="11.89" height="11.95" fill="#373d47"/><rect x="0.00" y="23.30" width="11.89" height="11.95" fill="#252727"/><rect x="11.59" y="23.30" width="11.89" height="11.95" fill="#2d3338"/><rect x="23.18" y="23.30" width="11.89" height="11.95" fill="#282b30"/><rect x="34.77" y="23.30" width="11.89" height="11.95" fill="#27282b"/><rect x="46.36" y="23.30" width="11.89" height="11.95" fill="#2c3035"/><rect x="57.95" y="23.30" width="11.89" height="11.95" fill="#27282a"/><rect x="69.54" y="23.30" width="11.89" height="11.95" fill="#242625"/><rect x="81.13" y="23.30" width="11.89" height="11.95" fill="#262a30"/><rect x="92.72" y="23.30" width="11.89" height="11.95" fill="#2b3035"/><rect x="104.31" y="23.30" width="11.89" height="11.95" fill="#272b2f"/></svg>
<svg class="i" style="left:481.10px;top:1183.30px" width="115.90" height="23.40" viewBox="0 0 115.90 23.40"><rect x="0.00" y="0.00" width="11.89" height="12.00" fill="#2e343a"/><rect x="11.59" y="0.00" width="11.89" height="12.00" fill="#2b2f33"/><rect x="23.18" y="0.00" width="11.89" height="12.00" fill="#292d38"/><rect x="34.77" y="0.00" width="11.89" height="12.00" fill="#2a2c2f"/><rect x="46.36" y="0.00" width="11.89" height="12.00" fill="#252a30"/><rect x="57.95" y="0.00" width="11.89" height="12.00" fill="#27292b"/><rect x="69.54" y="0.00" width="11.89" height="12.00" fill="#292a2d"/><rect x="81.13" y="0.00" width="11.89" height="12.00" fill="#282a33"/><rect x="92.72" y="0.00" width="11.89" height="12.00" fill="#2c3038"/><rect x="104.31" y="0.00" width="11.89" height="12.00" fill="#252629"/><rect x="0.00" y="11.70" width="11.89" height="12.00" fill="#3b444f"/><rect x="11.59" y="11.70" width="11.89" height="12.00" fill="#455464"/><rect x="23.18" y="11.70" width="11.89" height="12.00" fill="#475669"/><rect x="34.77" y="11.70" width="11.89" height="12.00" fill="#424a55"/><rect x="46.36" y="11.70" width="11.89" height="12.00" fill="#485b6c"/><rect x="57.95" y="11.70" width="11.89" height="12.00" fill="#464d55"/><rect x="69.54" y="11.70" width="11.89" height="12.00" fill="#3b4149"/><rect x="81.13" y="11.70" width="11.89" height="12.00" fill="#424e61"/><rect x="92.72" y="11.70" width="11.89" height="12.00" fill="#4c5d78"/><rect x="104.31" y="11.70" width="11.89" height="12.00" fill="#3a4049"/></svg>
<svg class="i" style="left:481.10px;top:1241.30px" width="115.90" height="23.10" viewBox="0 0 115.90 23.10"><rect x="0.00" y="0.00" width="11.89" height="11.85" fill="#39424c"/><rect x="11.59" y="0.00" width="11.89" height="11.85" fill="#363b46"/><rect x="23.18" y="0.00" width="11.89" height="11.85" fill="#374454"/><rect x="34.77" y="0.00" width="11.89" height="11.85" fill="#373c42"/><rect x="46.36" y="0.00" width="11.89" height="11.85" fill="#303945"/><rect x="57.95" y="0.00" width="11.89" height="11.85" fill="#363c42"/><rect x="69.54" y="0.00" width="11.89" height="11.85" fill="#343a42"/><rect x="81.13" y="0.00" width="11.89" height="11.85" fill="#353a46"/><rect x="92.72" y="0.00" width="11.89" height="11.85" fill="#3c4453"/><rect x="104.31" y="0.00" width="11.89" height="11.85" fill="#2d3238"/><rect x="0.00" y="11.55" width="11.89" height="11.85" fill="#2f3740"/><rect x="11.59" y="11.55" width="11.89" height="11.85" fill="#3a444f"/><rect x="23.18" y="11.55" width="11.89" height="11.85" fill="#38434f"/><rect x="34.77" y="11.55" width="11.89" height="11.85" fill="#333a45"/><rect x="46.36" y="11.55" width="11.89" height="11.85" fill="#3c4955"/><rect x="57.95" y="11.55" width="11.89" height="11.85" fill="#323939"/><rect x="69.54" y="11.55" width="11.89" height="11.85" fill="#2c3236"/><rect x="81.13" y="11.55" width="11.89" height="11.85" fill="#363c4b"/><rect x="92.72" y="11.55" width="11.89" height="11.85" fill="#3a4452"/><rect x="104.31" y="11.55" width="11.89" height="11.85" fill="#2f353a"/></svg>
<svg class="i" style="left:802.70px;top:1305.60px;" width="24.00" height="24.00" viewBox="0 0 512 512"><path fill="#dedede" d="M328 256c0 39.800-32.200 72-72 72s-72-32.200-72-72 32.200-72 72-72 72 32.200 72 72zm104-72c-39.800 0-72 32.200-72 72s32.200 72 72 72 72-32.200 72-72-32.200-72-72-72zm-352 0c-39.800 0-72 32.200-72 72s32.200 72 72 72 72-32.200 72-72-32.200-72-72-72z"/></svg>
<div class="t f" style="left:323.0px;top:1366.0px;color:#828282;">© 2022 EspoCRM</div>
<div class="r" style="left:1325.2px;top:204.0px;width:492.5px;height:347.2px;background:#242424;border-radius:8px"></div>
<div class="t b" style="left:1344.6px;top:228.4px;color:#808080;letter-spacing:-0.04px;">Assigned User</div>
<svg class="i" style="left:1345.20px;top:262.80px" width="20.00" height="20.00" viewBox="0 0 20.00 20.00"><rect x="4.00" y="0.00" width="4.30" height="4.30" fill="#ecc350"/><rect x="12.00" y="0.00" width="4.30" height="4.30" fill="#ecc350"/><rect x="0.00" y="4.00" width="4.30" height="4.30" fill="#ecc350"/><rect x="4.00" y="4.00" width="4.30" height="4.30" fill="#ecc350"/><rect x="8.00" y="4.00" width="4.30" height="4.30" fill="#ecc350"/><rect x="12.00" y="4.00" width="4.30" height="4.30" fill="#ecc350"/><rect x="16.00" y="4.00" width="4.30" height="4.30" fill="#ecc350"/><rect x="4.00" y="8.00" width="4.30" height="4.30" fill="#ecc350"/><rect x="8.00" y="8.00" width="4.30" height="4.30" fill="#ecc350"/><rect x="12.00" y="8.00" width="4.30" height="4.30" fill="#ecc350"/><rect x="4.00" y="12.00" width="4.30" height="4.30" fill="#ecc350"/><rect x="8.00" y="12.00" width="4.30" height="4.30" fill="#ecc350"/><rect x="12.00" y="12.00" width="4.30" height="4.30" fill="#ecc350"/><rect x="0.00" y="16.00" width="4.30" height="4.30" fill="#ecc350"/><rect x="4.00" y="16.00" width="4.30" height="4.30" fill="#ecc350"/><rect x="8.00" y="16.00" width="4.30" height="4.30" fill="#ecc350"/><rect x="12.00" y="16.00" width="4.30" height="4.30" fill="#ecc350"/><rect x="16.00" y="16.00" width="4.30" height="4.30" fill="#ecc350"/></svg>
<svg class="i" style="left:1365.30px;top:258.90px" width="184.48" height="34.20" viewBox="0 0 184.48 34.20"><rect x="0.00" y="0.00" width="11.83" height="11.70" fill="#26241f"/><rect x="11.53" y="0.00" width="11.83" height="11.70" fill="#2d323a"/><rect x="23.06" y="0.00" width="11.83" height="11.70" fill="#30363d"/><rect x="34.59" y="0.00" width="11.83" height="11.70" fill="#2b2f35"/><rect x="46.12" y="0.00" width="11.83" height="11.70" fill="#303740"/><rect x="57.65" y="0.00" width="11.83" height="11.70" fill="#2a2e34"/><rect x="69.18" y="0.00" width="11.83" height="11.70" fill="#292d31"/><rect x="80.71" y="0.00" width="11.83" height="11.70" fill="#272b2f"/><rect x="92.24" y="0.00" width="11.83" height="11.70" fill="#2a2e38"/><rect x="103.77" y="0.00" width="11.83" height="11.70" fill="#343a40"/><rect x="115.30" y="0.00" width="11.83" height="11.70" fill="#2b303a"/><rect x="126.83" y="0.00" width="11.83" height="11.70" fill="#2c3136"/><rect x="138.36" y="0.00" width="11.83" height="11.70" fill="#2d323b"/><rect x="149.89" y="0.00" width="11.83" height="11.70" fill="#2a2e34"/><rect x="161.42" y="0.00" width="11.83" height="11.70" fill="#2a2e34"/><rect x="172.95" y="0.00" width="11.83" height="11.70" fill="#2a2e32"/><rect x="0.00" y="11.40" width="11.83" height="11.70" fill="#26241f"/><rect x="11.53" y="11.40" width="11.83" height="11.70" fill="#475a6e"/><rect x="23.06" y="11.40" width="11.83" height="11.70" fill="#414d5d"/><rect x="34.59" y="11.40" width="11.83" height="11.70" fill="#414d5d"/><rect x="46.12" y="11.40" width="11.83" height="11.70" fill="#404c5a"/><rect x="57.65" y="11.40" width="11.83" height="11.70" fill="#445264"/><rect x="69.18" y="11.40" width="11.83" height="11.70" fill="#3f5058"/><rect x="80.71" y="11.40" width="11.83" height="11.70" fill="#43505f"/><rect x="92.24" y="11.40" width="11.83" height="11.70" fill="#2a2e38"/><rect x="103.77" y="11.40" width="11.83" height="11.70" fill="#454e5c"/><rect x="115.30" y="11.40" width="11.83" height="11.70" fill="#465669"/><rect x="126.83" y="11.40" width="11.83" height="11.70" fill="#3d3f4a"/><rect x="138.36" y="11.40" width="11.83" height="11.70" fill="#414e5a"/><rect x="149.89" y="11.40" width="11.83" height="11.70" fill="#404b59"/><rect x="161.42" y="11.40" width="11.83" height="11.70" fill="#434f5c"/><rect x="172.95" y="11.40" width="11.83" height="11.70" fill="#31383d"/><rect x="0.00" y="22.80" width="11.83" height="11.70" fill="#232220"/><rect x="69.18" y="22.80" width="11.83" height="11.70" fill="#2a2c2f"/></svg>
<div class="t b" style="left:1344.6px;top:309.5px;color:#808080;letter-spacing:0.81px;">Teams</div>
<div class="t b" style="left:1344.6px;top:343.3px;color:#b4b4b4;letter-spacing:0.90px;">None</div>
<div class="t b" style="left:1344.6px;top:390.7px;color:#808080;letter-spacing:0.07px;">Created</div>
<div class="t b" style="left:1344.6px;top:424.6px;color:#e1e1e1;letter-spacing:-0.01px;">Today 15:20</div>
<div class="t b" style="left:1344.6px;top:471.8px;color:#808080;letter-spacing:0.46px;">Modified</div>
<div class="t b" style="left:1344.6px;top:505.7px;color:#e1e1e1;letter-spacing:-0.01px;">Today 15:24</div>
<div class="t b" style="left:1466.2px;top:424.6px;color:#777;">›</div>
<div class="t b" style="left:1466.2px;top:505.7px;color:#777;">›</div>
<svg class="i" style="left:1472.30px;top:426.30px" width="184.48" height="23.00" viewBox="0 0 184.48 23.00"><rect x="0.00" y="0.00" width="11.83" height="11.80" fill="#2d3340"/><rect x="11.53" y="0.00" width="11.83" height="11.80" fill="#4a5a6e"/><rect x="23.06" y="0.00" width="11.83" height="11.80" fill="#3f4757"/><rect x="34.59" y="0.00" width="11.83" height="11.80" fill="#424f62"/><rect x="46.12" y="0.00" width="11.83" height="11.80" fill="#3a4150"/><rect x="57.65" y="0.00" width="11.83" height="11.80" fill="#47586e"/><rect x="69.18" y="0.00" width="11.83" height="11.80" fill="#364040"/><rect x="80.71" y="0.00" width="11.83" height="11.80" fill="#3b4552"/><rect x="92.24" y="0.00" width="11.83" height="11.80" fill="#3d4656"/><rect x="103.77" y="0.00" width="11.83" height="11.80" fill="#3d4656"/><rect x="115.30" y="0.00" width="11.83" height="11.80" fill="#434e62"/><rect x="126.83" y="0.00" width="11.83" height="11.80" fill="#3d4557"/><rect x="138.36" y="0.00" width="11.83" height="11.80" fill="#3d4656"/><rect x="149.89" y="0.00" width="11.83" height="11.80" fill="#3b4350"/><rect x="161.42" y="0.00" width="11.83" height="11.80" fill="#3f4959"/><rect x="172.95" y="0.00" width="11.83" height="11.80" fill="#262626"/><rect x="0.00" y="11.50" width="11.83" height="11.80" fill="#2c313b"/><rect x="11.53" y="11.50" width="11.83" height="11.80" fill="#394350"/><rect x="23.06" y="11.50" width="11.83" height="11.80" fill="#343b47"/><rect x="34.59" y="11.50" width="11.83" height="11.80" fill="#343b47"/><rect x="46.12" y="11.50" width="11.83" height="11.80" fill="#343b47"/><rect x="57.65" y="11.50" width="11.83" height="11.80" fill="#44566b"/><rect x="69.18" y="11.50" width="11.83" height="11.80" fill="#333c3f"/><rect x="80.71" y="11.50" width="11.83" height="11.80" fill="#30363c"/><rect x="92.24" y="11.50" width="11.83" height="11.80" fill="#2e333b"/><rect x="103.77" y="11.50" width="11.83" height="11.80" fill="#373f4b"/><rect x="115.30" y="11.50" width="11.83" height="11.80" fill="#343a46"/><rect x="126.83" y="11.50" width="11.83" height="11.80" fill="#30353f"/><rect x="138.36" y="11.50" width="11.83" height="11.80" fill="#2e333c"/><rect x="149.89" y="11.50" width="11.83" height="11.80" fill="#3a4250"/><rect x="161.42" y="11.50" width="11.83" height="11.80" fill="#2f343a"/><rect x="172.95" y="11.50" width="11.83" height="11.80" fill="#262626"/></svg>
<svg class="i" style="left:1472.30px;top:507.40px" width="184.48" height="23.00" viewBox="0 0 184.48 23.00"><rect x="0.00" y="0.00" width="11.83" height="11.80" fill="#2d3340"/><rect x="11.53" y="0.00" width="11.83" height="11.80" fill="#4a5a6e"/><rect x="23.06" y="0.00" width="11.83" height="11.80" fill="#3f4757"/><rect x="34.59" y="0.00" width="11.83" height="11.80" fill="#424f62"/><rect x="46.12" y="0.00" width="11.83" height="11.80" fill="#3a4150"/><rect x="57.65" y="0.00" width="11.83" height="11.80" fill="#47586e"/><rect x="69.18" y="0.00" width="11.83" height="11.80" fill="#364040"/><rect x="80.71" y="0.00" width="11.83" height="11.80" fill="#3b4552"/><rect x="92.24" y="0.00" width="11.83" height="11.80" fill="#3d4656"/><rect x="103.77" y="0.00" width="11.83" height="11.80" fill="#3d4656"/><rect x="115.30" y="0.00" width="11.83" height="11.80" fill="#434e62"/><rect x="126.83" y="0.00" width="11.83" height="11.80" fill="#3d4557"/><rect x="138.36" y="0.00" width="11.83" height="11.80" fill="#3d4656"/><rect x="149.89" y="0.00" width="11.83" height="11.80" fill="#3b4350"/><rect x="161.42" y="0.00" width="11.83" height="11.80" fill="#3f4959"/><rect x="172.95" y="0.00" width="11.83" height="11.80" fill="#262626"/><rect x="0.00" y="11.50" width="11.83" height="11.80" fill="#2c313b"/><rect x="11.53" y="11.50" width="11.83" height="11.80" fill="#394350"/><rect x="23.06" y="11.50" width="11.83" height="11.80" fill="#343b47"/><rect x="34.59" y="11.50" width="11.83" height="11.80" fill="#343b47"/><rect x="46.12" y="11.50" width="11.83" height="11.80" fill="#343b47"/><rect x="57.65" y="11.50" width="11.83" height="11.80" fill="#44566b"/><rect x="69.18" y="11.50" width="11.83" height="11.80" fill="#333c3f"/><rect x="80.71" y="11.50" width="11.83" height="11.80" fill="#30363c"/><rect x="92.24" y="11.50" width="11.83" height="11.80" fill="#2e333b"/><rect x="103.77" y="11.50" width="11.83" height="11.80" fill="#373f4b"/><rect x="115.30" y="11.50" width="11.83" height="11.80" fill="#343a46"/><rect x="126.83" y="11.50" width="11.83" height="11.80" fill="#30353f"/><rect x="138.36" y="11.50" width="11.83" height="11.80" fill="#2e333c"/><rect x="149.89" y="11.50" width="11.83" height="11.80" fill="#3a4250"/><rect x="161.42" y="11.50" width="11.83" height="11.80" fill="#2f343a"/><rect x="172.95" y="11.50" width="11.83" height="11.80" fill="#262626"/></svg>
<div class="r" style="left:1325.2px;top:575.0px;width:492.5px;height:716.5px;background:#242424;border-radius:8px"></div>
<div class="t p" style="left:1340.0px;top:583.0px;color:#d4d4d4;">Statistics</div>
<div class="t b" style="left:1344.6px;top:643.4px;color:#808080;letter-spacing:-0.18px;">Sent</div>
<div class="t b" style="left:1344.6px;top:677.2px;color:#b4b4b4;letter-spacing:0.90px;">None</div>
<div class="t b" style="left:1344.6px;top:724.5px;color:#808080;letter-spacing:0.34px;">Opened</div>
<div class="t b" style="left:1344.6px;top:758.3px;color:#e1e1e1;">1</div>
<div class="t b" style="left:1344.6px;top:805.7px;color:#808080;letter-spacing:-0.09px;">Clicked</div>
<div class="t b" style="left:1344.6px;top:839.5px;color:#e1e1e1;">0</div>
<div class="t b" style="left:1344.6px;top:886.8px;color:#808080;letter-spacing:0.25px;">Opted Out</div>
<div class="t b" style="left:1344.6px;top:920.6px;color:#e1e1e1;">0</div>
<div class="t b" style="left:1344.6px;top:968.0px;color:#808080;letter-spacing:0.12px;">Bounced</div>
<div class="t b" style="left:1344.6px;top:1001.8px;color:#e1e1e1;">0</div>
<div class="t b" style="left:1344.6px;top:1049.1px;color:#808080;letter-spacing:-0.07px;">Leads Created</div>
<div class="t b" style="left:1344.6px;top:1082.9px;color:#b4b4b4;letter-spacing:0.90px;">None</div>
<div class="t b" style="left:1344.6px;top:1130.2px;color:#808080;letter-spacing:0.11px;">Opted In</div>
<div class="t b" style="left:1344.6px;top:1164.0px;color:#b4b4b4;letter-spacing:0.90px;">None</div>
<div class="t b" style="left:1344.6px;top:1211.4px;color:#808080;letter-spacing:0.01px;">Revenue</div>
<div class="t b" style="left:1344.6px;top:1245.2px;color:#b4b4b4;letter-spacing:0.90px;">None</div>
</body></html>
